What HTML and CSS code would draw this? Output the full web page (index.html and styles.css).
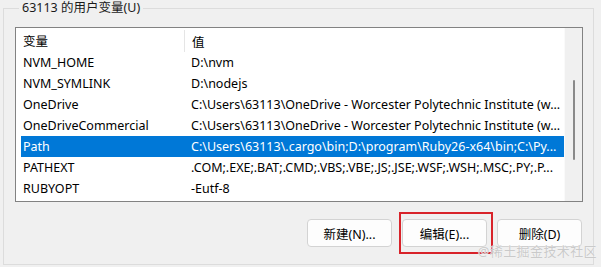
FILE: index.html
```html
<!DOCTYPE html>
<html lang="zh-CN">
<head>
    <meta charset="UTF-8" />
    <title>用户变量</title>
    <link rel="stylesheet" href="styles.css">
</head>
<body>

<!-- ===== User variables group ===== -->
<fieldset class="group">
    <legend>63113 的用户变量(U)</legend>

    <div class="listview">
        <div class="list-body">
            <div class="list-head">
                <span class="col-name">变量</span>
                <span class="col-value">值</span>
            </div>
            <div class="row"><span class="col-name">NVM_HOME</span><span class="col-value">D:\nvm</span></div>
            <div class="row"><span class="col-name">NVM_SYMLINK</span><span class="col-value">D:\nodejs</span></div>
            <div class="row"><span class="col-name">OneDrive</span><span class="col-value">C:\Users\63113\OneDrive - Worcester Polytechnic Institute (w...</span></div>
            <div class="row"><span class="col-name">OneDriveCommercial</span><span class="col-value">C:\Users\63113\OneDrive - Worcester Polytechnic Institute (w...</span></div>
            <div class="row selected"><span class="col-name">Path</span><span class="col-value">C:\Users\63113\.cargo\bin;D:\program\Ruby26-x64\bin;C:\Py...</span></div>
            <div class="row"><span class="col-name">PATHEXT</span><span class="col-value">.COM;.EXE;.BAT;.CMD;.VBS;.VBE;.JS;.JSE;.WSF;.WSH;.MSC;.PY;.P...</span></div>
            <div class="row"><span class="col-name">RUBYOPT</span><span class="col-value">-Eutf-8</span></div>
        </div>
        <div class="scrollbar"><div class="thumb"></div></div>
    </div>

    <div class="actions">
        <button class="btn">新建(N)...</button>
        <span class="marked"><button class="btn">编辑(E)...</button></span>
        <button class="btn">删除(D)</button>
    </div>
</fieldset>

<div class="watermark">@稀土掘金技术社区</div>

</body>
</html>
```

FILE: styles.css
```css
/* ─────────── Page ─────────── */
* { box-sizing: border-box; }

body{
    margin:0;
    width:601px;
    height:267px;
    overflow:hidden;
    background:#f0f0f0;
    font-family:"Noto Sans","Noto Sans CJK SC",sans-serif;
    font-size:12.5px;
    color:#000;
    position:relative;
}

/* ─────────── Group box ─────────── */
.group{
    margin:0 7px 0 3px;
    padding:0 10px 16px 11px;
    border:1px solid #dcdcdc;
    height:265px;
}
.group legend{
    margin-left:4px;
    padding:0 3px;
    line-height:16px;
    color:#1a1a1a;
}

/* ─────────── List view ─────────── */
.listview{
    display:flex;
    margin-top:11px;
    height:175px;
    border:1px solid #828282;
    background:#fff;
}
.list-body{
    flex:1;
    min-width:0;
    overflow:hidden;
}
.list-head{
    display:flex;
    height:24px;
    align-items:center;
    padding-left:5px;
}
.list-head .col-value{
    align-self:stretch;
    display:flex;
    align-items:center;
    border-left:1px solid #e5e5e5;
    margin-top:2px;
}
.row{
    display:flex;
    height:21px;
    align-items:center;
    margin-left:5px;
    white-space:nowrap;
}
.col-name{
    width:163px;
    padding-left:2px;
    flex:none;
}
.col-value{
    flex:1;
    padding-left:7px;
    overflow:hidden;
    white-space:nowrap;
}
.row.selected{
    background:#0078d7;
    color:#fff;
}

.scrollbar{
    width:18px;
    flex:none;
    background:#f0f0f0;
    border-left:1px solid #fafafa;
    padding-top:52px;
    display:flex;
    justify-content:center;
}
.scrollbar .thumb{
    width:2px;
    height:80px;
    border-radius:1px;
    background:#8a8a8a;
}

/* ─────────── Buttons ─────────── */
.actions{
    display:flex;
    justify-content:flex-end;
    gap:10px;
    margin-top:17px;
    padding-right:1px;
}
.btn{
    width:85px;
    height:28px;
    font:inherit;
    color:#000;
    background:#fdfdfd;
    border:1px solid #d3d3d3;
    border-radius:4px;
    padding:0;
}
.marked{
    position:relative;
    display:flex;
}
.marked::after{
    content:"";
    position:absolute;
    top:-7px; bottom:-7px;
    left:-3px; right:-6px;
    border:2px solid #d8232a;
}

/* ─────────── Watermark ─────────── */
.watermark{
    position:absolute;
    right:4px;
    bottom:8px;
    font-size:13px;
    line-height:15px;
    color:#cacaca;
    text-shadow:0 0 1px #fff;
    letter-spacing:0.4px;
}
```
